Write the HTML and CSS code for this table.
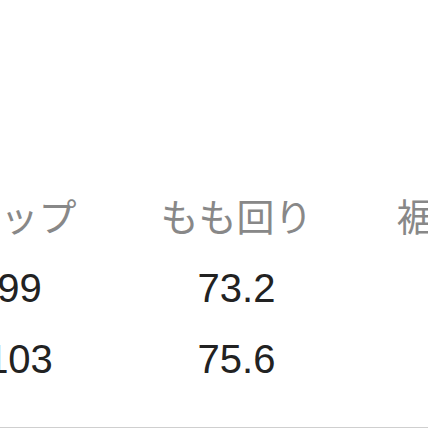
FILE: index.html
```html
<!DOCTYPE html>
<html lang="ja">
<head>
<meta charset="utf-8">
<link rel="stylesheet" href="styles.css">
</head>
<body>
<div class="frame">
  <div class="size-table">
    <div class="th">ヒップ</div>
    <div class="th">もも回り</div>
    <div class="th">裾周り</div>
    <div class="td">99</div>
    <div class="td">73.2</div>
    <div class="td"></div>
    <div class="td">103</div>
    <div class="td">75.6</div>
    <div class="td"></div>
  </div>
</div>
</body>
</html>
```
FILE: styles.css
```css
html, body {
  margin: 0;
  padding: 0;
  background: #ffffff;
  overflow: hidden;
}
.frame {
  width: 428px;
  height: 428px;
  box-sizing: border-box;
  border-bottom: 1px solid #cfcfcf;
  overflow: hidden;
}
.size-table {
  display: grid;
  grid-template-columns: repeat(3, 217px);
  row-gap: 27px;
  margin-left: -89px;
  padding-top: 195px;
  width: 651px;
}
.th {
  font-family: "Noto Sans CJK JP", "Noto Sans", sans-serif;
  font-size: 38px;
  line-height: 40px;
  color: #888888;
  text-align: center;
  margin-bottom: 4px;
}
.td {
  font-family: "Liberation Sans", Arial, sans-serif;
  font-size: 40px;
  line-height: 44px;
  color: #222222;
  text-align: center;
}
```
